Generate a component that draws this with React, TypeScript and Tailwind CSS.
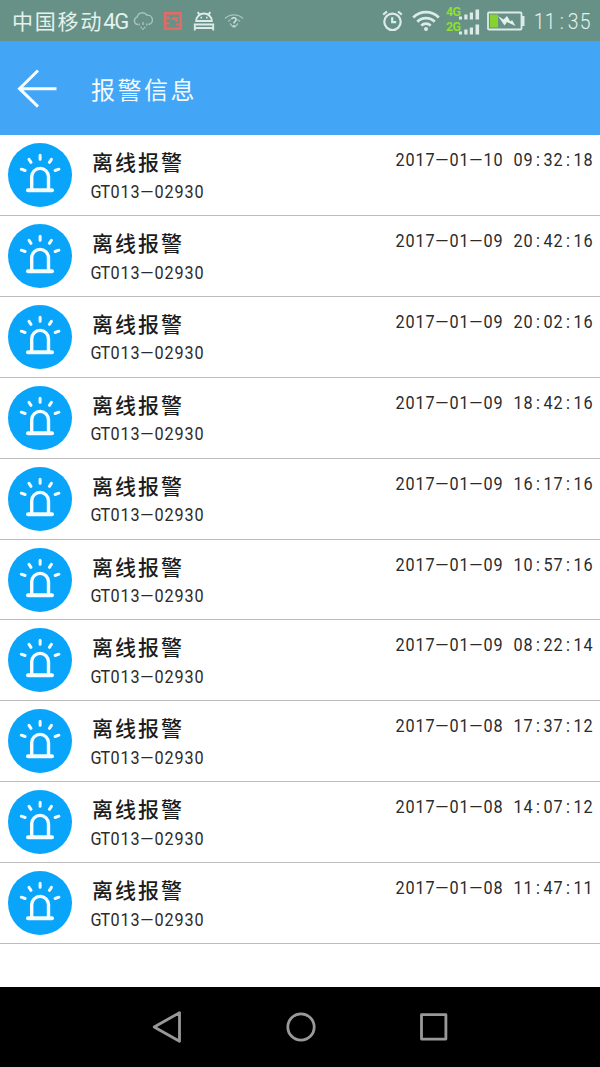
import React from 'react';

const alarms = [
  '2017-01-10 09:32:18',
  '2017-01-09 20:42:16',
  '2017-01-09 20:02:16',
  '2017-01-09 18:42:16',
  '2017-01-09 16:17:16',
  '2017-01-09 10:57:16',
  '2017-01-09 08:22:14',
  '2017-01-08 17:37:12',
  '2017-01-08 14:07:12',
  '2017-01-08 11:47:11',
];

// Fixed-pitch text with long dashes
const FixedText: React.FC<{ text: string }> = ({ text }) => (
  <span className="flex whitespace-pre font-['Roboto',sans-serif] text-[18px] leading-5 text-[#2b2b2b]">
    {text.split('').map((char, index) => (
      <span
        key={index}
        className={char === '-' ? 'w-[14px] -translate-y-px scale-x-[2.6] text-center' : 'w-[10px] scale-x-[0.9] text-center'}
      >
        {char}
      </span>
    ))}
  </span>
);

const AlarmIcon: React.FC = () => (
  <svg className="h-16 w-16 shrink-0" viewBox="0 0 64 64" fill="none" stroke="#f4fcff" strokeWidth="3" strokeLinecap="round">
    <circle cx="32" cy="32" r="32" fill="#08a5fb" stroke="none" />
    <path d="M23.7 46V33.8a8.4 8.4 0 0 1 16.8 0V46" strokeWidth="3.4" />
    <path d="M20 47.2H44" strokeWidth="4" />
    <path d="M32.1 12.3v4M21 16.3l2 3M43.4 16.3l-2 3M13.3 26.2l3.8 1.3M50.9 26.2l-3.8 1.3" />
  </svg>
);

const SignalBars: React.FC = () => (
  <svg className="h-3 w-[21px]" viewBox="0 0 21 12" fill="#dcebe6">
    <path d="M0 8.5h3v3H0zM5.3 6.5h3.2v5H5.3zM10.8 4.5h3.2v7h-3.2zM16.5 1.5h3.6v10h-3.6z" />
  </svg>
);

const StatusBar: React.FC = () => (
  <div className="flex h-[41px] items-center justify-between bg-[#679187] pt-px pr-[10px] pl-3 text-[#e4f1ed]">
    <div className="flex items-center">
      <span className="flex w-[117px] items-center font-['Noto_Sans_CJK_SC',sans-serif] text-[21px] tracking-[1.8px]">
        中国移动
        <span className="font-['Roboto',sans-serif] text-[22px] tracking-[-1.2px]">4G</span>
      </span>
      <svg className="ml-1 h-5 w-5" viewBox="0 0 20 20" fill="none" stroke="#a9c4bc" strokeWidth="1.4">
        <path d="M5 13.5H4.5a3.8 3.8 0 0 1-.3-7.4 5.3 5.3 0 0 1 9.7-1.9 4.7 4.7 0 0 1 1.6 9.3" />
        <path d="M6.2 12.5v2M10 11v3M13.8 12.5v2M7.5 16.5H9M11 16.5h1.5M10 17v2" strokeWidth="1.4" />
      </svg>
      <svg className="ml-[11px] h-[18px] w-[18px]" viewBox="0 0 18 18" fill="none" stroke="#e36a65">
        <rect x="1.3" y="1.3" width="15.4" height="15.4" strokeWidth="2.6" />
        <path d="M2 11.5h4M3 6h3M12 12.5h4" strokeWidth="2" />
        <path d="M6 8l3-3h5v5h-3V8z" fill="#e36a65" stroke="none" />
      </svg>
      <svg className="ml-[11px] h-5 w-[22px]" viewBox="0 0 22 20" fill="none" stroke="#dcebe6" strokeWidth="1.9">
        <path d="M3.2 10a7.8 7.5 0 0 1 15.6 0zM6.3 3.7L4.8 1M15.7 3.7L17.2 1" />
        <path d="M1.8 19.5v-6h18.4v6M2 17h18" />
        <path d="M7.5 6.6h1.6M13 6.6h1.6" />
      </svg>
      <svg className="ml-[9px] h-4 w-5" viewBox="0 0 20 16" fill="none" stroke="#a9c4bc" strokeWidth="1.3">
        <path d="M1 5.5a13 13 0 0 1 18 0M4 8.5a9 9 0 0 1 3-2M16 8.5a9 9 0 0 0-3-2M9.5 14.5l-3.5-4M10.5 14.5l3.5-4" />
        <path d="M7.5 6c1-2 5-1.5 4.5 1 0 1.5-2 1.5-2 3.5M10 12v2" stroke="#d3e4de" strokeWidth="1.6" />
      </svg>
    </div>
    <div className="flex items-center">
      <svg className="h-[22px] w-[21px]" viewBox="0 0 21 22" fill="none" stroke="#dcebe6" strokeWidth="2.2">
        <circle cx="10.5" cy="11.8" r="8.2" />
        <path d="M10.2 7.2v5h4M1.2 4.6L5 1.5M19.8 4.6L16 1.5" />
      </svg>
      <svg className="ml-[9px] h-[22px] w-7" viewBox="0 0 28 22" fill="none" stroke="#dcebe6" strokeWidth="2.7">
        <path d="M1.2 7.5a18 18 0 0 1 25.6 0M5.3 11.7a12.2 12.2 0 0 1 17.4 0M9.3 15.6a6.6 6.6 0 0 1 9.4 0" />
        <circle cx="14" cy="19" r="2" fill="#dcebe6" stroke="none" />
      </svg>
      <div className="-mt-0.5 ml-[6px] flex flex-col font-['Roboto',sans-serif] text-[12.5px] leading-[13px] font-bold text-[#8edf2f]">
        <div className="flex h-[15px] items-end">
          <span className="w-[13px] self-start tracking-[-0.8px]">4G</span>
          <SignalBars />
        </div>
        <div className="flex h-[15px] items-end">
          <span className="w-[13px] self-start tracking-[-0.8px]">2G</span>
          <SignalBars />
        </div>
      </div>
      <svg className="ml-[7px] h-5 w-[38px]" viewBox="0 0 38 20">
        <rect x="1" y="1.5" width="33.5" height="17" rx="1" fill="none" stroke="#dcebe6" strokeWidth="1.8" />
        <rect x="35" y="5" width="2.5" height="10" fill="#dcebe6" />
        <rect x="3" y="3.5" width="8" height="13" fill="#86d22e" />
        <path d="M11 5l5.5 3.5L20 5l3.2 5.2 2-1L28.5 15 20 11l-2.5 3.5z" fill="#e4f1ed" />
      </svg>
      <div className="ml-2 flex pt-0.5 font-['Roboto',sans-serif] text-[22px] leading-6 font-light">
        {'11:35'.split('').map((char, index) => (
          <span key={index} className="w-[11.4px] scale-x-[0.88] text-center">{char}</span>
        ))}
      </div>
    </div>
  </div>
);

const App: React.FC = () => (
  <div className="flex h-[1067px] w-[600px] flex-col overflow-hidden bg-white">
    <StatusBar />
    <header className="flex h-[94px] items-center bg-[#42a5f5] pl-4">
      <svg className="h-10 w-[42px]" viewBox="0 0 42 40" fill="none" stroke="#f7fcff" strokeWidth="3">
        <path d="M22 2.5L3.5 20.7l18.5 18M3 20.7h37.5" />
      </svg>
      <h1 className="mt-0.5 ml-[33px] font-['Noto_Sans_CJK_SC',sans-serif] text-[24px] leading-8 tracking-[2.5px] text-[#f3faff]">
        报警信息
      </h1>
    </header>
    <ul className="flex-1">
      {alarms.map((time) => (
        <li key={time} className="flex h-[80.92px] border-b border-[#bdbdbd] pt-2 pr-[7px] pl-2">
          <AlarmIcon />
          <div className="ml-[17.5px] flex-1 pt-[3px]">
            <h2 className="pl-[2.5px] font-['Noto_Sans_CJK_SC',sans-serif] text-[21px] leading-[30px] font-medium tracking-[2px] text-[#1c1c1c]">
              离线报警
            </h2>
            <div className="mt-[5.6px]">
              <FixedText text="GT013-02930" />
            </div>
          </div>
          <div className="pt-[7px]">
            <FixedText text={time} />
          </div>
        </li>
      ))}
    </ul>
    <nav className="flex h-20 items-center justify-between bg-black pr-[152px] pl-[151px]">
      <svg className="h-8 w-[30px]" viewBox="0 0 30 32" fill="none" stroke="#9b9898" strokeWidth="2.8" strokeLinejoin="round">
        <path d="M3.2 16L28.5 1.7v28.6z" />
      </svg>
      <svg className="h-[30px] w-[30px]" viewBox="0 0 30 30" fill="none" stroke="#9b9898" strokeWidth="2.8">
        <circle cx="15" cy="15" r="13.2" />
      </svg>
      <svg className="h-7 w-7" viewBox="0 0 28 28" fill="none" stroke="#9b9898" strokeWidth="2.8" strokeLinejoin="round">
        <rect x="1.5" y="1.7" width="24.4" height="24.4" />
      </svg>
    </nav>
  </div>
);

export default App;
